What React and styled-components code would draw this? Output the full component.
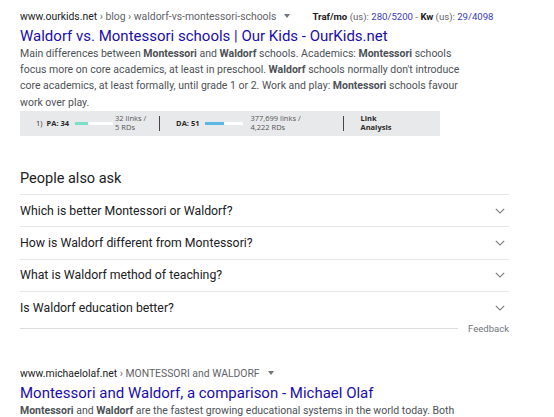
import styled, { createGlobalStyle } from "styled-components";

const GlobalStyle = createGlobalStyle`
  body {
    margin: 0;
    background: #fff;
    font-family: Roboto, "Liberation Sans", Arial, sans-serif;
  }
`;

const results = {
  first: {
    domain: "www.ourkids.net",
    path: " › blog › waldorf-vs-montessori-schools",
    title: "Waldorf vs. Montessori schools | Our Kids - OurKids.net",
  },
  second: {
    domain: "www.michaelolaf.net",
    path: " › MONTESSORI and WALDORF",
    title: "Montessori and Waldorf, a comparison - Michael Olaf",
  },
};

const questions = [
  "Which is better Montessori or Waldorf?",
  "How is Waldorf different from Montessori?",
  "What is Waldorf method of teaching?",
  "Is Waldorf education better?",
];

export default function App() {
  return (
    <>
      <GlobalStyle />
      <Page>
        <Result>
          <CiteRow>
            <Cite>
              <Domain>{results.first.domain}</Domain>
              {results.first.path}
            </Cite>
            <DropArrow />
            <Traffic>
              <b>Traf/mo</b> (us): <Num>280/5200</Num> - <b>Kw</b> (us):{" "}
              <Num>29/4098</Num>
            </Traffic>
          </CiteRow>
          <Title href="#">{results.first.title}</Title>
          <Snippet>
            Main differences between <b>Montessori</b> and <b>Waldorf</b>{" "}
            schools. Academics: <b>Montessori</b> schools
            <br />
            focus more on core academics, at least in preschool.{" "}
            <b>Waldorf</b> schools normally don't introduce
            <br />
            core academics, at least formally, until grade 1 or 2. Work and
            play: <b>Montessori</b> schools favour
            <br />
            work over play.
          </Snippet>
          <MozBar>
            <Rank>1)</Rank>
            <Metric $left={4}>PA: 34</Metric>
            <Meter $left={6} $color="#7ddfc6" $fill={34} />
            <Links $left={2} $width={36}>
              32 links /<br />5 RDs
            </Links>
            <Sep $left={8} />
            <Metric $left={16}>DA: 51</Metric>
            <Meter $left={6} $color="#5db7e6" $fill={51} />
            <Links $left={7} $width={50}>
              377,699 links /<br />4,222 RDs
            </Links>
            <Sep $left={43} />
            <Metric $left={16}>
              Link
              <br />
              Analysis
            </Metric>
          </MozBar>
        </Result>

        <Ask>
          <AskHeading>People also ask</AskHeading>
          {questions.map((q, i) => (
            <Question key={q} $last={i === questions.length - 1}>
              <span>{q}</span>
              <Chevron viewBox="0 0 12 7" $last={i === questions.length - 1}>
                <polyline points="1,1 6,6 11,1" />
              </Chevron>
            </Question>
          ))}
          <FeedbackRow>
            <FeedbackLine />
            <Feedback>Feedback</Feedback>
          </FeedbackRow>
        </Ask>

        <Result $top={36}>
          <CiteRow>
            <Cite>
              <Domain>{results.second.domain}</Domain>
              {results.second.path}
            </Cite>
            <DropArrow />
          </CiteRow>
          <Title href="#">{results.second.title}</Title>
          <Snippet>
            <b>Montessori</b> and <b>Waldorf</b> are the fastest growing
            educational systems in the world today. Both
          </Snippet>
        </Result>
      </Page>
    </>
  );
}

/********************* styled components *************************/
const Page = styled.div`
  padding: 8px 0 0 20px;
  width: 489px;
`;

const Result = styled.div`
  margin-top: ${(p) => p.$top || 0}px;
`;

const CiteRow = styled.div`
  display: flex;
  align-items: center;
  height: 16px;
  white-space: nowrap;
`;

const Cite = styled.span`
  font-size: 10.4px;
  color: #5f6368;
`;

const Domain = styled.span`
  color: #202124;
`;

const DropArrow = styled.span`
  margin-left: 8px;
  width: 0;
  height: 0;
  border-left: 3.5px solid transparent;
  border-right: 3.5px solid transparent;
  border-top: 4px solid #70757a;
`;

const Traffic = styled.span`
  margin-left: 22px;
  font-size: 9.6px;
  color: #5f6368;

  b {
    color: #202124;
  }
`;

const Num = styled.span`
  color: #3b3bb3;
`;

const Title = styled.a`
  display: block;
  margin-top: 2px;
  font-size: 15px;
  line-height: 20px;
  color: #1a0dab;
  text-decoration: none;
  white-space: nowrap;
`;

const Snippet = styled.div`
  font-size: 10.5px;
  line-height: 16.2px;
  color: #4d5156;
  white-space: nowrap;

  b {
    color: #4d5156;
    font-weight: 700;
  }
`;

const MozBar = styled.div`
  display: flex;
  align-items: center;
  box-sizing: border-box;
  width: 420px;
  height: 25px;
  margin-top: 0;
  padding-left: 16px;
  background: #e8e9ea;
  font-family: "Open Sans", "Noto Sans", sans-serif;
  font-size: 7.5px;
  color: #333;
`;

const Rank = styled.span``;

const Metric = styled.span`
  margin-left: ${(p) => p.$left}px;
  font-weight: 700;
  line-height: 9px;
  color: #2b2b2b;
`;

const Meter = styled.span`
  margin-left: ${(p) => p.$left}px;
  width: 38px;
  height: 3px;
  background: linear-gradient(
    to right,
    ${(p) => p.$color} ${(p) => p.$fill}%,
    #fff ${(p) => p.$fill}%
  );
`;

const Links = styled.span`
  margin-left: ${(p) => p.$left}px;
  width: ${(p) => p.$width}px;
  line-height: 9.3px;
  color: #555;
  white-space: nowrap;
`;

const Sep = styled.span`
  margin-left: ${(p) => p.$left}px;
  width: 1px;
  height: 15px;
  background: #444;
`;

const Ask = styled.div`
  margin-top: 33px;
`;

const AskHeading = styled.div`
  font-size: 14.5px;
  line-height: 20px;
  color: #202124;
  padding-bottom: 5px;
`;

const Question = styled.div`
  display: flex;
  align-items: ${(p) => (p.$last ? "flex-start" : "center")};
  justify-content: space-between;
  box-sizing: border-box;
  height: ${(p) => (p.$last ? 37.4 : 32.4)}px;
  padding: ${(p) => (p.$last ? "8.4px 0 0" : "0")};
  border-top: 1px solid #e6e6e6;
  font-size: 12.3px;
  color: #202124;

  span {
    line-height: 16px;
  }
`;

const Chevron = styled.svg`
  width: 10px;
  height: 6px;
  margin-right: 4px;
  margin-top: ${(p) => (p.$last ? 5 : 0)}px;
  fill: none;
  stroke: #70757a;
  stroke-width: 1.3;
`;

const FeedbackRow = styled.div`
  display: flex;
  align-items: center;
  gap: 10px;
  height: 1px;
`;

const FeedbackLine = styled.div`
  flex: 1;
  border-top: 1px solid #dadce0;
`;

const Feedback = styled.span`
  font-size: 9.5px;
  color: #70757a;
`;
